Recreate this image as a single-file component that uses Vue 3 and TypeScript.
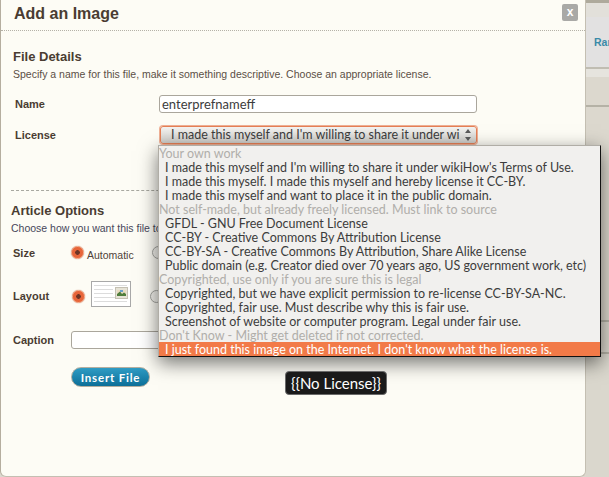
<script setup lang="ts">
interface Row { text: string; group?: boolean; active?: boolean }
const rows: Row[] = [
  { text: 'Your own work', group: true },
  { text: "I made this myself and I'm willing to share it under wikiHow's Terms of Use." },
  { text: 'I made this myself. I made this myself and hereby license it CC-BY.' },
  { text: 'I made this myself and want to place it in the public domain.' },
  { text: 'Not self-made, but already freely licensed. Must link to source', group: true },
  { text: 'GFDL - GNU Free Document License' },
  { text: 'CC-BY - Creative Commons By Attribution License' },
  { text: 'CC-BY-SA - Creative Commons By Attribution, Share Alike License' },
  { text: 'Public domain (e.g. Creator died over 70 years ago, US government work, etc)' },
  { text: 'Copyrighted, use only if you are sure this is legal', group: true },
  { text: 'Copyrighted, but we have explicit permission to re-license CC-BY-SA-NC.' },
  { text: 'Copyrighted, fair use. Must describe why this is fair use.' },
  { text: 'Screenshot of website or computer program. Legal under fair use.' },
  { text: "Don't Know - Might get deleted if not corrected.", group: true },
  { text: "I just found this image on the Internet. I don't know what the license is.", active: true },
]
</script>

<template>
  <div class="page">
    <section class="modal">
      <header class="head">
        <h1>Add an Image</h1>
        <button class="close">x</button>
      </header>
      <div class="details">
        <h2>File Details</h2>
        <p>Specify a name for this file, make it something descriptive. Choose an appropriate license.</p>
        <div class="field name-field">
          <label>Name</label>
          <div class="text-input">enterprefnameff</div>
        </div>
        <div class="field license-field">
          <label>License</label>
          <div class="select">
            <span class="select-text">I made this myself and I'm willing to share it under wi</span>
            <svg class="arrows" width="8" height="14" viewBox="0 0 8 14"><path d="M4 1 7 5H1ZM4 13 1 9H7Z" fill="#5a5a5a"/></svg>
          </div>
        </div>
      </div>
      <div class="options">
        <h2>Article Options</h2>
        <p>Choose how you want this file to</p>
        <div class="opt size-row">
          <label>Size</label>
          <span class="radio on"></span>
          <span class="auto">Automatic</span>
          <span class="radio off"></span>
        </div>
        <div class="opt layout-row">
          <label>Layout</label>
          <span class="radio on"></span>
          <svg class="thumb" width="40" height="26" viewBox="0 0 40 26">
            <rect x=".5" y=".5" width="39" height="25" fill="#fff" stroke="#a8a8a8"/>
            <path d="M3 4.5H36M3 8.5H22M3 12.5H22M3 16.5H36M3 20.5H36" stroke="#dcdcdc"/>
            <rect x="24.500" y="6.500" width="12" height="11" fill="#e6e3d6" stroke="#c4c0b2"/>
            <rect x="26" y="9" width="9" height="6" fill="#e8dcc0"/>
            <path d="M26 15V13L29 10.500 31 13 33 11.500 35 13V15Z" fill="#4f7d3c"/>
            <rect x="29" y="9" width="3" height="2" fill="#6aa0c8"/>
          </svg>
          <span class="radio off second"></span>
        </div>
        <div class="opt caption-row">
          <label>Caption</label>
          <div class="caption"></div>
        </div>
        <button class="insert">Insert File</button>
      </div>
    </section>
    <aside class="side">
      <div class="side-top"></div>
      <div class="side-link">Ran</div>
      <div class="side-strip"></div>
      <div class="side-mid"></div>
      <div class="side-low"></div>
      <div class="side-low short"></div>
      <div class="side-rest"></div>
    </aside>

    <ul class="menu">
      <li v-for="r in rows" :key="r.text" :class="{ group: r.group, active: r.active }">{{ r.text }}</li>
    </ul>
    <div class="tip">{{ '{' + '{No License}' + '}' }}</div>
  </div>
</template>

<style>
html, body { margin: 0; overflow: hidden; }
</style>

<style scoped>
.page {
  position: relative;
  width: 609px;
  height: 477px;
  display: flex;
  overflow: hidden;
  background: #dcd8ce;
  font-family: "Liberation Sans", Arial, sans-serif;
  color: #4f4238;
}
.modal {
  width: 586px;
  height: 477px;
  box-sizing: border-box;
  background: #fdfcf5;
  border-left: 1px solid #b5ae9f;
  border-right: 1px solid #c4bfb2;
  border-bottom: 1px solid #c4bfb2;
  border-radius: 0 0 6px 6px;
  flex: none;
}
.head {
  height: 31px;
  box-sizing: border-box;
  display: flex;
  justify-content: space-between;
  align-items: flex-start;
  border-bottom: 1px dotted #b5b2a8;
  padding: 0 7px 0 13px;
}
h1 { margin: 4px 0 0; font-size: 16px; line-height: 19px; font-weight: 700; color: #4a3c32; }
.close {
  width: 16px; height: 17px; margin-top: 4px; padding: 0; border: 0;
  background: #a9a9a6; color: #fff; border-radius: 2px;
  font: 700 12px/15px "Liberation Sans", sans-serif;
}
h2 { margin: 0; font-size: 13px; line-height: 16px; font-weight: 700; color: #4a3c32; }
p { margin: 2px 0 0; font-size: 10.5px; line-height: 14px; color: #5b4f45; }
label { font-size: 11px; line-height: 14px; font-weight: 700; color: #4a3c32; }
.details {
  margin-left: 10px; padding: 18px 0 0 2px; height: 160px; box-sizing: border-box;
  border-bottom: 1px dashed #a8a8a0;
}
.field { display: flex; align-items: center; }
.field label { width: 146px; padding-left: 2px; box-sizing: border-box; flex: none; }
.name-field { margin-top: 14px; }
.license-field { margin-top: 13px; }
.text-input {
  width: 318px; height: 18px; box-sizing: border-box;
  border: 1px solid #aaa69c; border-radius: 3px; background: #fff;
  font: 13px/16px Lato, sans-serif; padding-left: 2px; color: #3c3c3c;
}
.select {
  width: 317px; height: 18px; box-sizing: border-box; margin-left: 1px;
  border: 1px solid #e57f55; border-radius: 3px;
  box-shadow: 0 0 0 1px #efb095;
  background: linear-gradient(#f4f3f1, #cdcbc7);
  display: flex; align-items: center; justify-content: space-between;
  font: 12.5px/16px Lato, sans-serif; color: #3c3c3c;
  padding: 0 4px 0 10px; white-space: nowrap; overflow: hidden;
}
.arrows { flex: none; }
.options { padding: 12px 0 0 10px; }
.options p { margin-top: 2px; color: #47475a; }
.opt { display: flex; align-items: center; }
.opt label { width: 60px; padding-left: 2px; box-sizing: border-box; flex: none; }
.radio { width: 13px; height: 13px; box-sizing: border-box; border-radius: 50%; flex: none; }
.radio.on {
  background: radial-gradient(circle, #6e3424 0 2px, #e7653a 2.6px);
  border: 1px solid #ee9a76;
  box-shadow: 0 0 1px #b0563a;
}
.radio.off { background: #f4f3ee; border: 1px solid #a5a5a0; }
.size-row { margin-top: 11px; height: 13px; }
.auto { font-size: 10.5px; line-height: 13px; margin: 5px 0 0 3px; width: 47px; white-space: nowrap; }
.size-row .radio.off { margin-left: 18px; }
.layout-row { margin-top: 22px; height: 30px; }
.layout-row .radio.on { margin-left: 1px; }
.thumb { margin: 0 0 4px 6px; flex: none; align-self: flex-start; }
.second { margin-left: 19px; }
.caption-row { margin-top: 20px; }
.caption {
  width: 100px; height: 18px; box-sizing: border-box;
  border: 1px solid #aaa69c; border-radius: 3px; background: #fff;
}
.insert {
  display: block; margin: 18px 0 0 60px; width: 79px; height: 20px; padding: 0;
  border: 1px solid #b5ae9f; border-radius: 10px;
  background: linear-gradient(#2f9cc4, #0c6f98);
  color: #fff; font: 700 11.5px/17px Lato, sans-serif; letter-spacing: .8px;
}
.side { flex: 1; min-width: 0; display: flex; flex-direction: column; overflow: hidden; }
.side-top { height: 14px; flex: none; background: #e2e0da; border-top: 3px solid #aeaa9c; }
.side-link {
  height: 50px; flex: none; background: #e2e1e1; color: #3a8aa8;
  font: 700 10.5px/50px "Liberation Sans", sans-serif; padding-left: 8px;
  white-space: nowrap; overflow: hidden;
}
.side-strip { height: 8px; flex: none; background: #e6e4de; border-top: 2px solid #c0bdb2; }
.side-mid { height: 28px; flex: none; background: #dcd8ce; }
.side-low { height: 213px; flex: none; box-sizing: content-box; background: #dcd8ce; border-top: 2px solid #b5b2a6; }
.side-low.short { height: 30px; }
.side-rest { flex: 1; background: #dad7cd; border-top: 2px solid #b5b2a6; }
.menu {
  position: absolute; left: 158px; top: 145px; width: 443px; margin: 0; padding: 0;
  list-style: none; box-sizing: border-box; background: #f1f0ee;
  border-right: 1px solid #111; border-bottom: 1px solid #111;
  border-top: 1px solid #b0ada6; border-left: 1px solid #b0ada6;
  box-shadow: 0 6px 18px rgba(0,0,0,.55);
  font: 12.5px/16px Lato, sans-serif; color: #3c3c3c;
}
.menu li { height: 14px; padding-left: 6px; white-space: nowrap; overflow: hidden; }
.menu li.group { padding-left: 0; color: #b0aeaa; }
.menu li.active { background: #f27a48; color: #fff; }
.tip {
  position: absolute; left: 285px; top: 371px; width: 102px; height: 24px; box-sizing: border-box;
  background: #1a1a1a; border: 1px solid #6a6a6a; border-radius: 4px; color: #fff;
  font: 15px/22px Lato, sans-serif; text-align: center;
}
</style>
